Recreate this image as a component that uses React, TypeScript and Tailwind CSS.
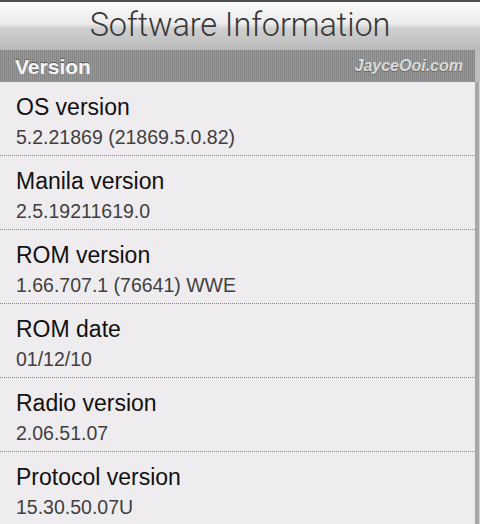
import React from "react";

const rows = [
  { t: "OS version", v: "5.2.21869 (21869.5.0.82)" },
  { t: "Manila version", v: "2.5.19211619.0" },
  { t: "ROM version", v: "1.66.707.1 (76641) WWE" },
  { t: "ROM date", v: "01/12/10" },
  { t: "Radio version", v: "2.06.51.07" },
  { t: "Protocol version", v: "15.30.50.07U" },
];

export default function App() {
  return (
    <div className="w-[480px] h-[524px] overflow-hidden flex flex-col bg-[#efecef] font-['Liberation_Sans',Arial,sans-serif]">
      <div className="h-[2px] bg-[#4d4d4d] shrink-0" />
      <div className="h-[48px] shrink-0 flex items-center justify-center bg-[linear-gradient(180deg,#fafafa_0%,#ececec_45%,#d0d0d0_55%,#b9b9b9_100%)]">
        <span className="font-['Roboto',sans-serif] font-light text-[32.5px] leading-none text-[#383838] tracking-[-0.1px] -mt-[1px]">
          Software Information
        </span>
      </div>
      <div className="flex flex-1 min-h-0">
        <div className="w-[475px] flex flex-col">
          <div className="h-[32px] shrink-0 flex items-center justify-between pl-[15px] pr-[12px] bg-[repeating-linear-gradient(90deg,#858585_0px,#858585_1px,#999999_1px,#999999_2px)]">
            <span className="text-[21px] font-bold text-[#f6f6f6] leading-none [text-shadow:0_-1px_0_#5a5a5a]">
              Version
            </span>
            <span className="text-[16px] font-bold italic text-[#dadada] leading-none [text-shadow:0_1px_1px_#666]">
              JayceOoi.com
            </span>
          </div>
          {rows.map((r) => (
            <div
              key={r.t}
              className="h-[74px] shrink-0 flex flex-col pl-[16px] pt-[11px] border-b border-dotted border-[#8a8a8a]"
            >
              <div className="text-[23px] leading-[28px] text-[#111]">{r.t}</div>
              <div className="text-[19.5px] leading-[24px] mt-[4px] text-[#404040]">{r.v}</div>
            </div>
          ))}
        </div>
        <div className="flex-1 flex flex-col">
          <div className="h-[32px] bg-[#bdbdbd]" />
          <div className="flex-1 flex">
            <div className="w-[4px] bg-[#a9a5a9]" />
            <div className="flex-1 bg-[#d6d3d6]" />
          </div>
        </div>
      </div>
    </div>
  );
}
